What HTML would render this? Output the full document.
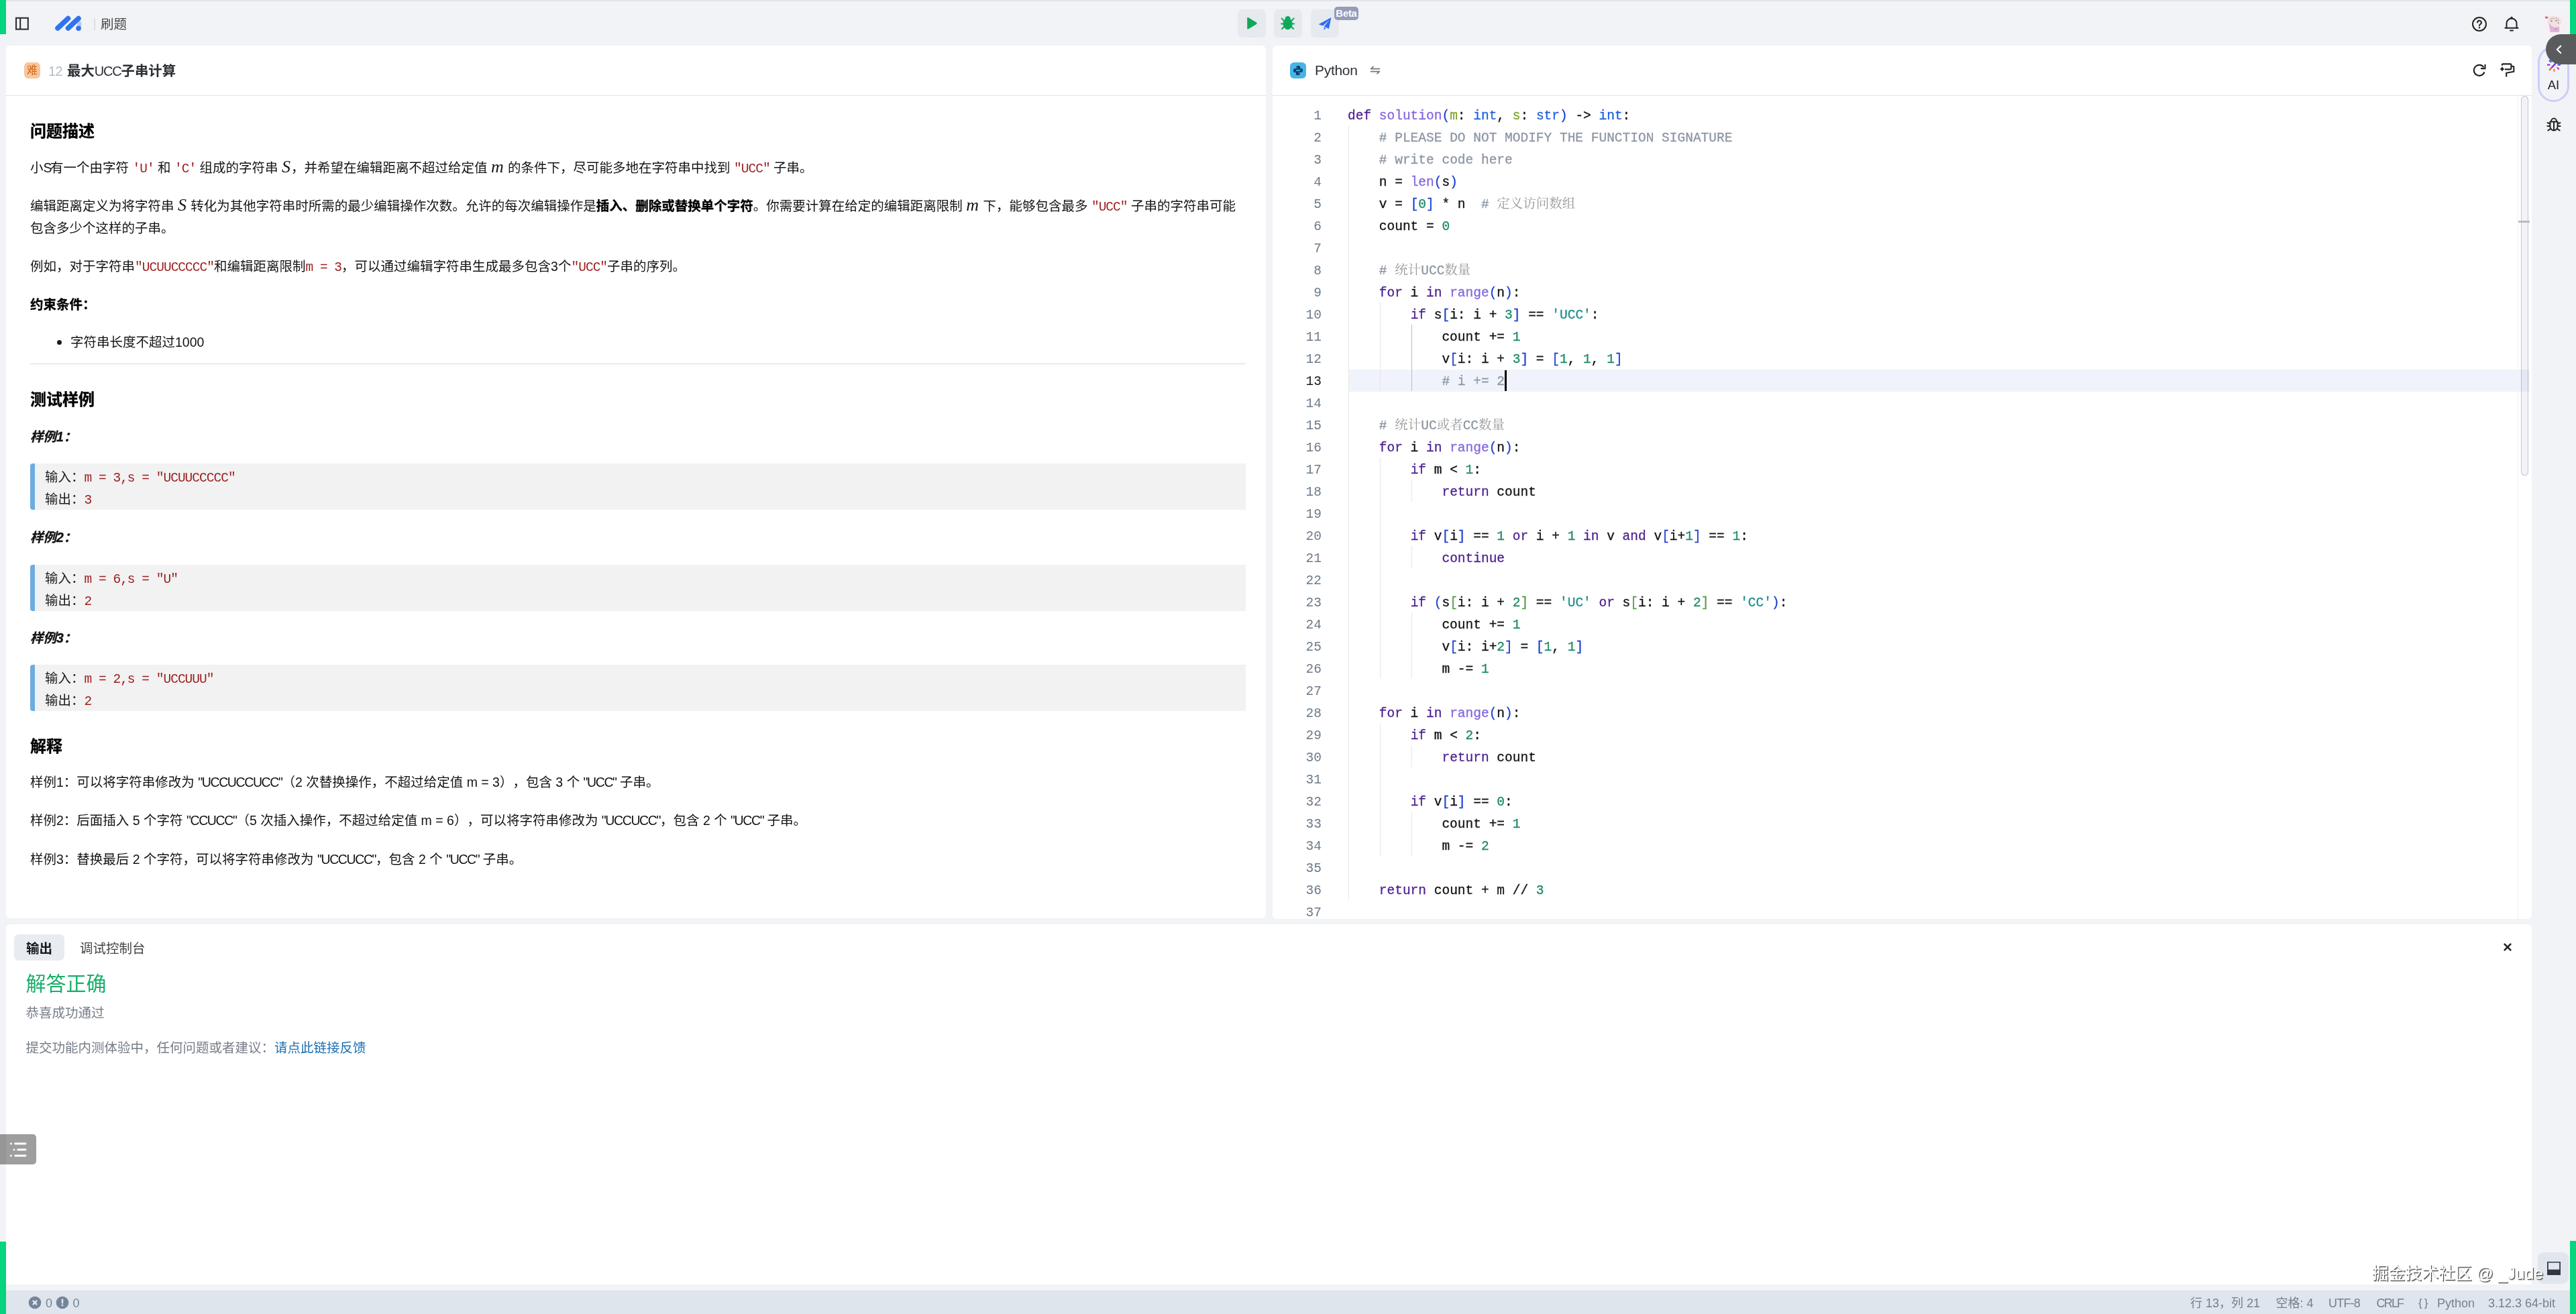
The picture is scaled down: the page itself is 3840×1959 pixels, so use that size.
<!DOCTYPE html>
<html lang="zh-CN">
<head>
<meta charset="utf-8">
<title>最大UCC子串计算</title>
<style>
*{box-sizing:border-box;margin:0;padding:0}
html,body{width:3840px;height:1959px;overflow:hidden;background:#f1f3f6}
body{position:relative;text-spacing-trim:space-all;font-family:"Liberation Sans","Noto Sans CJK SC",sans-serif;font-size:19.5px;color:#1c1c1c;line-height:33px}
.abs{position:absolute}
body>*{will-change:transform}
.gbar{position:absolute;background:#06d47e}
.panel{position:absolute;background:#fff;border-radius:6px}
.phead{position:absolute;left:0;right:0;top:0;height:75px;border-bottom:1px solid #e0e2e5}
/* top bar */
.tbtn{position:absolute;top:14px;width:42px;height:42px;border-radius:7px;background:#e6e9ee}
/* left content */
.md{position:absolute;left:36px;top:74px;width:1812px}
.md h2{font-size:24px;font-weight:700;line-height:36px;color:#000;-webkit-text-stroke:0.35px;position:absolute;left:0}
.md p{position:absolute;left:0;width:1812px;color:#141414}
.md .mono{font-family:"Liberation Mono",monospace;color:#9c1c1c;font-size:19.5px;letter-spacing:-0.98px;line-height:20px}
.md .math{font-family:"Liberation Serif",serif;font-style:italic;font-size:26px;line-height:20px;letter-spacing:1px}
.md b{font-weight:700;color:#000;-webkit-text-stroke:0.3px}
.bq{position:absolute;left:0;width:1812px;height:69px;background:#f2f2f2;border-left:7.5px solid #6cace0;border-radius:4px 0 0 4px;padding:4px 0 0 15px;white-space:pre}
.uc{letter-spacing:-1.4px}
.ex{font-style:italic;font-weight:700;color:#000;-webkit-text-stroke:0.3px}
/* editor */
.ed{position:absolute;left:0;top:0;right:0;bottom:0;font-family:"Liberation Mono","Noto Serif CJK SC",monospace;font-size:19.5px;line-height:33px;color:#111}
.ln{position:absolute;left:0;width:73px;text-align:right;color:#6c7a89;height:33px;padding-top:3px}
.ln.cur{color:#171a1f}
.cl{position:absolute;left:112px;white-space:pre;height:33px;padding-top:3px;-webkit-text-stroke:0.3px}
.k{color:#4b1f8f}.f{color:#8367df}.t{color:#1f5fe0}.p{color:#7ea321}.n{color:#1f8a68}.s{color:#1a8f8a}.c{color:#8c96a3}
.cj{font-family:"Noto Serif CJK SC",serif;line-height:0;font-weight:400;color:#999;-webkit-text-stroke:0}
.b1{color:#1f3fd0}.b2{color:#5a9a4c}.b3{color:#8a5a00}
.ig{position:absolute;width:1px;background:#e6e6e6}
.ig.act{background:#bdbdbd;width:1.5px}
/* bottom */
.sb{position:absolute;top:0;height:35px;line-height:38px;font-size:18px;color:#74808e;white-space:nowrap}
</style>
</head>
<body>
<!-- top strip -->
<div class="abs" style="left:0;top:0;width:3840px;height:2px;background:#e1e4e9"></div>
<div class="gbar" style="left:0;top:0;width:9px;height:51px"></div>
<div class="gbar" style="left:3831px;top:0;width:9px;height:51px"></div>
<div class="gbar" style="left:0;top:1851px;width:9px;height:108px"></div>
<div class="gbar" style="left:3831px;top:1850px;width:9px;height:109px"></div>
<!-- sidebar toggle icon -->
<svg class="abs" style="left:21px;top:24px" width="24" height="24" viewBox="0 0 24 24" fill="none" stroke="#2b2e35" stroke-width="2.1"><rect x="3" y="2.8" width="17.8" height="16.8"/><line x1="9.2" y1="2.8" x2="9.2" y2="19.6"/></svg>
<!-- logo -->
<svg class="abs" style="left:78px;top:20px" width="46" height="30" viewBox="0 0 46 30"><path d="M39 8.5 L43.3 14 L43.3 22 L36 22 Z" fill="#b9c8fa"/><path d="M8 22 L23.5 7.5" stroke="#2f73f0" stroke-width="7.6" stroke-linecap="round"/><path d="M23.5 22 L39 7.5" stroke="#2f73f0" stroke-width="7.6" stroke-linecap="round"/><circle cx="39" cy="22.2" r="3.8" fill="#2f73f0"/></svg>
<div class="abs" style="left:140px;top:27px;width:1.5px;height:18px;background:#dcdfe4"></div>
<div class="abs" style="left:150px;top:20px;font-size:19.5px;color:#4a4a4a;line-height:33px">刷题</div>
<!-- run buttons -->
<div class="tbtn" style="left:1845px"><svg width="42" height="42" viewBox="0 0 42 42"><path d="M14.2 13.2 Q14.2 11.2 16 12.2 L28 19.6 Q29.6 20.8 28 22 L16 29.2 Q14.2 30.2 14.2 28.2 Z" fill="#0fa958"/></svg></div>
<div class="tbtn" style="left:1899px"><svg width="42" height="42" viewBox="0 0 42 42" fill="#0fa958" stroke="#0fa958"><ellipse cx="20.6" cy="21.5" rx="6.6" ry="8.2"/><circle cx="20.6" cy="14" r="3.6"/><g stroke-width="2" stroke-linecap="round" fill="none"><path d="M15 17 L11.6 13.4"/><path d="M26.2 17 L29.6 13.4"/><path d="M14 21.6 L11 21.6"/><path d="M27.2 21.6 L30.2 21.6"/><path d="M15 26 L12 29"/><path d="M26.2 26 L29.2 29"/></g></svg></div>
<div class="tbtn" style="left:1954px"><svg width="42" height="42" viewBox="0 0 42 42"><path d="M30.4 12 L11.6 22.2 L18 24.6 L27.8 15.4 L19.8 25.6 L27 29 Z" fill="#2e6cf0"/><path d="M19.4 26.6 L19.9 30.6 L22.6 28.1 Z" fill="#2e6cf0"/></svg></div>
<div class="abs" style="left:1989px;top:10px;width:36px;height:20px;border-radius:5px;background:#959bb8;color:#fff;font-weight:700;font-size:15px;line-height:20px;text-align:center;letter-spacing:-0.3px">Beta</div>
<!-- right icons -->
<svg class="abs" style="left:3684px;top:24px" width="24" height="24" viewBox="0 0 24 24" fill="none" stroke="#222" stroke-width="2"><circle cx="12" cy="12" r="10"/><path d="M9.1 9.6 a2.9 2.9 0 1 1 4.3 2.5 c-1 .6-1.4 1.1-1.4 2.2" stroke-linecap="round"/><circle cx="12" cy="17.3" r="1.2" fill="#222" stroke="none"/></svg>
<svg class="abs" style="left:3732px;top:24px" width="24" height="24" viewBox="0 0 24 24" fill="none" stroke="#222" stroke-width="2" stroke-linecap="round" stroke-linejoin="round"><path d="M4.5 17.6 V11 a7.5 7.5 0 0 1 15 0 V17.6"/><path d="M2.4 17.8 H21.6"/><path d="M10 21.6 H14"/><circle cx="12" cy="2.6" r="0.8" fill="#222"/></svg>
<!-- avatar -->
<svg class="abs" style="left:3788px;top:15px" width="40" height="40" viewBox="0 0 40 40"><defs><radialGradient id="av" cx="50%" cy="50%" r="50%"><stop offset="0" stop-color="#f9f1f3"/><stop offset="0.75" stop-color="#f7f0f2"/><stop offset="1" stop-color="#f2f1f5"/></radialGradient></defs><circle cx="19.5" cy="20" r="18" fill="url(#av)"/><path d="M10 14.5 Q11.5 8.5 19 9 Q27 8.5 29.5 14 Q31 18 28 22 Q24 26 19 25.5 Q13 25 10.5 21 Q9 18 10 14.5 Z" fill="#f0e2e1"/><path d="M11.5 19 Q13 32 14 33 L27 33 Q27.5 27 27 24 Q22 27 18 25 Q14 23 11.500 19 Z" fill="#dcb6d8"/><path d="M13 14 q3-3 6-1 q3-2 6 0 q2 2 1 4" fill="none" stroke="#cfb9b6" stroke-width="1.2"/><circle cx="15.6" cy="16.2" r="1.2" fill="#a58a8a"/><circle cx="22.6" cy="15.8" r="1.2" fill="#a58a8a"/><circle cx="25.6" cy="19.4" r="0.8" fill="#8a6a70"/><path d="M5.600 10.600 q1.200-2 2.600-.5 q1.500-1.300 2.500 .3 q-.5 1.800-2.800 2.800 q-2-.8-2.300-2.600z" fill="#d9668a"/><path d="M21 27.500 v2.200 M22.800 27.200 v1.600" stroke="#9a6aa0" stroke-width="0.8"/></svg>
<!-- right side column -->
<div class="abs" style="left:3783px;top:69px;width:47px;height:83px;border:3px solid #cbcdf8;border-radius:24px;background:#f2f3f8"></div>
<svg class="abs" style="left:3796px;top:86px" width="22" height="22" viewBox="0 0 28 28" fill="none" stroke-linecap="round" stroke-width="3"><path d="M6 23 L18.5 9.5" stroke="#e8593a"/><path d="M11 17.6 L18.5 9.5" stroke="#7a3df0"/><path d="M14 2.6 V5.6" stroke="#2f5cf0"/><path d="M6 5.6 L8.4 8" stroke="#2f5cf0"/><path d="M22 5.6 L20.4 7.2" stroke="#1f2f9a"/><path d="M2.6 13.6 H5.6" stroke="#7a3df0"/><path d="M22.4 13.6 H25.4" stroke="#2f5cf0"/><path d="M20.6 19 L23 21.4" stroke="#d74fd0"/><path d="M14.6 22.4 V25.4" stroke="#f08a3a"/></svg>
<div class="abs" style="left:3783px;top:110px;width:47px;text-align:center;font-size:18.5px;line-height:33px;color:#222">AI</div>
<svg class="abs" style="left:3794px;top:172px" width="26" height="26" viewBox="0 0 26 26" fill="none" stroke="#222" stroke-width="2" stroke-linecap="round" stroke-linejoin="round"><path d="M7.4 9.4 H18.6 V16.8 a5.6 5.6 0 0 1 -11.2 0 Z"/><path d="M13 9.6 V22"/><path d="M9 9 a4 4.4 0 0 1 8 0"/><path d="M7.2 12.6 L3.6 11"/><path d="M18.8 12.6 L22.4 11"/><path d="M7.2 16 H3.4"/><path d="M18.8 16 H22.6"/><path d="M8 20 L4.4 22.4"/><path d="M18 20 L21.6 22.4"/></svg>
<!-- dark pill -->
<div class="abs" style="left:3795px;top:51px;width:60px;height:45px;border-radius:22.5px 0 0 22.5px;background:#595b5d"></div>
<svg class="abs" style="left:3808px;top:66px" width="14" height="16" viewBox="0 0 14 16" fill="none" stroke="#fff" stroke-width="2.2" stroke-linecap="round" stroke-linejoin="round"><path d="M9.2 2.6 L3.8 7.8 L9.2 13"/></svg>
<!-- LEFT PANEL -->
<div class="panel" style="left:9px;top:68px;width:1878px;height:1301px">
  <div class="phead"></div>
  <div class="abs" style="left:27px;top:25px;width:24px;height:24px;border-radius:6px;background:#f5c6a0;color:#d9620c;font-size:16px;line-height:23px;text-align:center">难</div>
  <div class="abs" style="left:63px;top:22px;font-size:20px;color:#b5bcc6;line-height:33px;letter-spacing:-0.5px">12</div>
  <div class="abs" style="left:91px;top:22px;font-size:20.4px;font-weight:700;color:#2b2f36;line-height:33px;white-space:nowrap">最大<span style="font-weight:400;letter-spacing:-1.2px;font-size:20px">UCC</span>子串计算</div>
  <div class="md" style="top:0">
    <h2 style="top:110px">问题描述</h2>
    <p style="top:165.5px">小<span style="letter-spacing:-2.5px">S</span>有一个由字符 <span class="mono">'U'</span> 和 <span class="mono">'C'</span> 组成的字符串 <span class="math">S</span>，并希望在编辑距离不超过给定值 <span class="math">m</span> 的条件下，尽可能多地在字符串中找到 <span class="mono">"UCC"</span> 子串。</p>
    <p style="top:223.3px">编辑距离定义为将字符串 <span class="math">S</span> 转化为其他字符串时所需的最少编辑操作次数。允许的每次编辑操作是<b>插入、删除或替换单个字符</b>。你需要计算在给定的编辑距离限制 <span class="math">m</span> 下，能够包含最多 <span class="mono">"UCC"</span> 子串的字符串可能包含多少个这样的子串。</p>
    <p style="top:312.9px">例如，对于字符串<span class="mono">"UCUUCCCCC"</span>和编辑距离限制<span class="mono">m = 3</span>，可以通过编辑字符串生成最多包含3个<span class="mono">"UCC"</span>子串的序列。</p>
    <p style="top:370px"><b>约束条件：</b></p>
    <div class="abs" style="left:40px;top:439px;width:7px;height:7px;border-radius:50%;background:#1c1c1c"></div>
    <p style="top:426.3px;left:60px">字符串长度不超过1000</p>
    <div class="abs" style="left:0;top:473.5px;width:1812px;height:1.5px;background:#d9d9d9"></div>
    <h2 style="top:509.5px">测试样例</h2>
    <p style="top:567px" class="ex">样例1：</p>
    <div class="bq" style="top:623.4px">输入：<span class="mono">m = 3,s = "UCUUCCCCC"</span>
输出：<span class="mono">3</span></div>
    <p style="top:717px" class="ex">样例2：</p>
    <div class="bq" style="top:773.8px">输入：<span class="mono">m = 6,s = "U"</span>
输出：<span class="mono">2</span></div>
    <p style="top:867px" class="ex">样例3：</p>
    <div class="bq" style="top:923.4px">输入：<span class="mono">m = 2,s = "UCCUUU"</span>
输出：<span class="mono">2</span></div>
    <h2 style="top:1026.7px">解释</h2>
    <p style="top:1082.3px">样例1：可以将字符串修改为 <span class="uc">"UCCUCCUCC"</span>（2 次替换操作，不超过给定值 m = 3），包含 3 个 <span class="uc">"UCC"</span> 子串。</p>
    <p style="top:1139.4px">样例2：后面插入 5 个字符 <span class="uc">"CCUCC"</span>（5 次插入操作，不超过给定值 m = 6），可以将字符串修改为 <span class="uc">"UCCUCC"</span>，包含 2 个 <span class="uc">"UCC"</span> 子串。</p>
    <p style="top:1196.8px">样例3：替换最后 2 个字符，可以将字符串修改为 <span class="uc">"UCCUCC"</span>，包含 2 个 <span class="uc">"UCC"</span> 子串。</p>
  </div>
</div>
<!-- RIGHT PANEL -->
<div class="panel" style="left:1897px;top:68px;width:1877px;height:1302px;overflow:hidden">
  <div class="phead"></div>
  <div class="abs" style="left:26px;top:25px;width:24px;height:24px;border-radius:6px;background:#46b4e8"></div>
  <svg class="abs" style="left:30px;top:29px" width="16" height="16" viewBox="0 0 16 16"><path d="M7.9 1 C5.6 1 5 2 5 3.1 V4.6 H8.1 V5.2 H3.4 C2 5.2 1 6.3 1 8.1 C1 9.9 2 11 3.3 11 H4.6 V9.3 C4.6 8 5.6 7 6.9 7 H9.6 C10.5 7 11.2 6.3 11.2 5.4 V3.1 C11.2 1.8 10.2 1 7.9 1 Z M6.3 2.1 a.7 .7 0 1 1 0 1.4 a.7 .7 0 0 1 0 -1.4z" fill="#0c3a66"/><path d="M8.1 15 C10.4 15 11 14 11 12.9 V11.4 H7.9 V10.8 H12.6 C14 10.8 15 9.7 15 7.9 C15 6.1 14 5 12.7 5 H11.4 V6.7 C11.4 8 10.4 9 9.1 9 H6.4 C5.5 9 4.8 9.7 4.8 10.6 V12.9 C4.8 14.2 5.8 15 8.1 15 Z M9.7 13.9 a.7 .7 0 1 1 0 -1.4 a.7 .7 0 0 1 0 1.4z" fill="#0c3a66"/></svg>
  <div class="abs" style="left:63px;top:20px;font-size:21px;color:#2b2f36;line-height:33px;letter-spacing:-0.3px">Python</div>
  <svg class="abs" style="left:145px;top:30px" width="16" height="14" viewBox="0 0 16 14" fill="none" stroke="#6b7785" stroke-width="1.6" stroke-linecap="round" stroke-linejoin="round"><path d="M14.6 4.6 H1.6 L5.2 1.4"/><path d="M1.4 8.6 H14.4 L10.8 11.8"/></svg>
  <!-- refresh -->
  <svg class="abs" style="left:1786px;top:23px" width="28" height="28" viewBox="0 0 28 28" fill="none" stroke="#222" stroke-width="2.1" stroke-linejoin="miter"><path d="M19.35 9.2 A8 8 0 1 0 20.4 16.4"/><path d="M21.5 4.9 V11.1 H15"/></svg>
  <!-- format -->
  <svg class="abs" style="left:1827px;top:23px" width="28" height="28" viewBox="0 0 28 28" fill="none" stroke="#222" stroke-width="2.1" stroke-linejoin="round"><path d="M10 12.4 H18 Q19.4 12.4 19.4 11 V5.8 Q19.4 4.4 18 4.4 H7.2 Q5.8 4.4 5.8 5.8 V6.8"/><path d="M19.4 7.7 H22 Q23.3 7.7 23.3 9.1 V15.8 L12.2 17.8 V23.6"/><path d="M6 8.3 Q7 11 9.7 11.9 Q7 12.8 6 15.5 Q5 12.8 2.3 11.9 Q5 11 6 8.3 Z" fill="#222" stroke="none"/></svg>
  <!-- editor -->
  <div class="ed">
    <div class="abs" style="left:113px;top:483px;width:1761px;height:33px;background:#f1f3fc"></div>
    <div class="abs" style="left:1856px;top:75px;width:1px;height:1227px;background:#f0f0ed"></div>
    <i class="ig" style="left:113.0px;top:119px;height:1155px"></i><i class="ig" style="left:159.8px;top:383px;height:132px"></i><i class="ig act" style="left:206.6px;top:416px;height:99px"></i><i class="ig" style="left:159.8px;top:614px;height:330px"></i><i class="ig" style="left:206.6px;top:647px;height:33px"></i><i class="ig" style="left:206.6px;top:746px;height:33px"></i><i class="ig" style="left:206.6px;top:845px;height:99px"></i><i class="ig" style="left:159.8px;top:1010px;height:198px"></i><i class="ig" style="left:206.6px;top:1043px;height:33px"></i><i class="ig" style="left:206.6px;top:1142px;height:66px"></i>
    <div class="ln" style="top:86px">1</div><div class="cl" style="top:86px"><span class="k">def</span> <span class="f">solution</span><span class="b1">(</span><span class="p">m</span>: <span class="t">int</span>, <span class="p">s</span>: <span class="t">str</span><span class="b1">)</span> -&gt; <span class="t">int</span>:</div>
<div class="ln" style="top:119px">2</div><div class="cl" style="top:119px">    <span class="c"># PLEASE DO NOT MODIFY THE FUNCTION SIGNATURE</span></div>
<div class="ln" style="top:152px">3</div><div class="cl" style="top:152px">    <span class="c"># write code here</span></div>
<div class="ln" style="top:185px">4</div><div class="cl" style="top:185px">    n = <span class="f">len</span><span class="b1">(</span>s<span class="b1">)</span></div>
<div class="ln" style="top:218px">5</div><div class="cl" style="top:218px">    v = <span class="b1">[</span><span class="n">0</span><span class="b1">]</span> * n  <span class="c"># <span class="cj">定义访问数组</span></span></div>
<div class="ln" style="top:251px">6</div><div class="cl" style="top:251px">    count = <span class="n">0</span></div>
<div class="ln" style="top:284px">7</div><div class="cl" style="top:284px"></div>
<div class="ln" style="top:317px">8</div><div class="cl" style="top:317px">    <span class="c"># <span class="cj">统计</span>UCC<span class="cj">数量</span></span></div>
<div class="ln" style="top:350px">9</div><div class="cl" style="top:350px">    <span class="k">for</span> i <span class="k">in</span> <span class="f">range</span><span class="b1">(</span>n<span class="b1">)</span>:</div>
<div class="ln" style="top:383px">10</div><div class="cl" style="top:383px">        <span class="k">if</span> s<span class="b1">[</span>i: i + <span class="n">3</span><span class="b1">]</span> == <span class="s">&#x27;UCC&#x27;</span>:</div>
<div class="ln" style="top:416px">11</div><div class="cl" style="top:416px">            count += <span class="n">1</span></div>
<div class="ln" style="top:449px">12</div><div class="cl" style="top:449px">            v<span class="b1">[</span>i: i + <span class="n">3</span><span class="b1">]</span> = <span class="b1">[</span><span class="n">1</span>, <span class="n">1</span>, <span class="n">1</span><span class="b1">]</span></div>
<div class="ln cur" style="top:482px">13</div><div class="cl" style="top:482px">            <span class="c"># i += 2</span></div>
<div class="ln" style="top:515px">14</div><div class="cl" style="top:515px"></div>
<div class="ln" style="top:548px">15</div><div class="cl" style="top:548px">    <span class="c"># <span class="cj">统计</span>UC<span class="cj">或者</span>CC<span class="cj">数量</span></span></div>
<div class="ln" style="top:581px">16</div><div class="cl" style="top:581px">    <span class="k">for</span> i <span class="k">in</span> <span class="f">range</span><span class="b1">(</span>n<span class="b1">)</span>:</div>
<div class="ln" style="top:614px">17</div><div class="cl" style="top:614px">        <span class="k">if</span> m &lt; <span class="n">1</span>:</div>
<div class="ln" style="top:647px">18</div><div class="cl" style="top:647px">            <span class="k">return</span> count</div>
<div class="ln" style="top:680px">19</div><div class="cl" style="top:680px"></div>
<div class="ln" style="top:713px">20</div><div class="cl" style="top:713px">        <span class="k">if</span> v<span class="b1">[</span>i<span class="b1">]</span> == <span class="n">1</span> <span class="k">or</span> i + <span class="n">1</span> <span class="k">in</span> v <span class="k">and</span> v<span class="b1">[</span>i+<span class="n">1</span><span class="b1">]</span> == <span class="n">1</span>:</div>
<div class="ln" style="top:746px">21</div><div class="cl" style="top:746px">            <span class="k">continue</span></div>
<div class="ln" style="top:779px">22</div><div class="cl" style="top:779px"></div>
<div class="ln" style="top:812px">23</div><div class="cl" style="top:812px">        <span class="k">if</span> <span class="b1">(</span>s<span class="b2">[</span>i: i + <span class="n">2</span><span class="b2">]</span> == <span class="s">&#x27;UC&#x27;</span> <span class="k">or</span> s<span class="b2">[</span>i: i + <span class="n">2</span><span class="b2">]</span> == <span class="s">&#x27;CC&#x27;</span><span class="b1">)</span>:</div>
<div class="ln" style="top:845px">24</div><div class="cl" style="top:845px">            count += <span class="n">1</span></div>
<div class="ln" style="top:878px">25</div><div class="cl" style="top:878px">            v<span class="b1">[</span>i: i+<span class="n">2</span><span class="b1">]</span> = <span class="b1">[</span><span class="n">1</span>, <span class="n">1</span><span class="b1">]</span></div>
<div class="ln" style="top:911px">26</div><div class="cl" style="top:911px">            m -= <span class="n">1</span></div>
<div class="ln" style="top:944px">27</div><div class="cl" style="top:944px"></div>
<div class="ln" style="top:977px">28</div><div class="cl" style="top:977px">    <span class="k">for</span> i <span class="k">in</span> <span class="f">range</span><span class="b1">(</span>n<span class="b1">)</span>:</div>
<div class="ln" style="top:1010px">29</div><div class="cl" style="top:1010px">        <span class="k">if</span> m &lt; <span class="n">2</span>:</div>
<div class="ln" style="top:1043px">30</div><div class="cl" style="top:1043px">            <span class="k">return</span> count</div>
<div class="ln" style="top:1076px">31</div><div class="cl" style="top:1076px"></div>
<div class="ln" style="top:1109px">32</div><div class="cl" style="top:1109px">        <span class="k">if</span> v<span class="b1">[</span>i<span class="b1">]</span> == <span class="n">0</span>:</div>
<div class="ln" style="top:1142px">33</div><div class="cl" style="top:1142px">            count += <span class="n">1</span></div>
<div class="ln" style="top:1175px">34</div><div class="cl" style="top:1175px">            m -= <span class="n">2</span></div>
<div class="ln" style="top:1208px">35</div><div class="cl" style="top:1208px"></div>
<div class="ln" style="top:1241px">36</div><div class="cl" style="top:1241px">    <span class="k">return</span> count + m // <span class="n">3</span></div>
<div class="ln" style="top:1274px">37</div><div class="cl" style="top:1274px"></div>
    <div class="abs" style="left:345.5px;top:484px;width:3px;height:31px;background:#000"></div>
    <!-- scrollbar -->
    <div class="abs" style="left:1861px;top:75px;width:11px;height:566px;border:1.5px solid rgba(100,110,145,.36);border-radius:6px;background:rgba(110,120,170,.09)"></div>
    <div class="abs" style="left:1857px;top:261px;width:17px;height:3px;background:#b9bcc2"></div>
  </div>
</div>
<!-- BOTTOM PANEL -->
<div class="panel" style="left:9px;top:1378px;width:3765px;height:537px;border-radius:6px 6px 0 0">
  <div class="abs" style="left:12px;top:15px;width:75px;height:39px;border-radius:7px;background:#e8ebf0"></div>
  <div class="abs" style="left:30px;top:19.5px;font-size:19.5px;font-weight:700;color:#16181d;line-height:33px">输出</div>
  <div class="abs" style="left:110px;top:19.5px;font-size:19.5px;color:#444;line-height:33px;white-space:nowrap">调试控制台</div>
  <div class="abs" style="left:29.5px;top:67px;font-size:30px;color:#1aaf6b;line-height:44px;white-space:nowrap">解答正确</div>
  <div class="abs" style="left:29.5px;top:115.5px;font-size:19.5px;color:#767d88;line-height:33px;white-space:nowrap">恭喜成功通过</div>
  <div class="abs" style="left:29.5px;top:167.5px;font-size:19.5px;color:#767d88;line-height:33px;white-space:nowrap">提交功能内测体验中，任何问题或者建议：<span style="color:#1a6fb5">请点此链接反馈</span></div>
  <svg class="abs" style="left:3721px;top:26px" width="16" height="16" viewBox="0 0 16 16" stroke="#222" stroke-width="2.6" stroke-linecap="round"><path d="M3.6 3.6 L12.4 12.4 M12.4 3.6 L3.6 12.4"/></svg>
</div>
<!-- floating outline button -->
<div class="abs" style="left:0;top:1691px;width:54px;height:45px;border-radius:0 5px 5px 0;background:rgba(0,0,0,.38)"></div>
<svg class="abs" style="left:13px;top:1699.5px" width="28" height="28" viewBox="0 0 28 28" fill="#fff" stroke="#fff" stroke-linecap="round"><circle cx="3.4" cy="5" r="1.5" stroke="none"/><circle cx="8" cy="14" r="1.5" stroke="none"/><circle cx="3.4" cy="23" r="1.5" stroke="none"/><path d="M9.6 5 H25" stroke-width="2.8"/><path d="M13.6 14 H25" stroke-width="2.8"/><path d="M9.6 23 H25" stroke-width="2.8"/></svg>
<!-- bottom-right toggle -->
<div class="abs" style="left:3783px;top:1867px;width:46px;height:47px;border-radius:9px;background:#e1e6ee"></div>
<svg class="abs" style="left:3796px;top:1880px" width="22" height="22" viewBox="0 0 22 22"><rect x="1" y="1" width="20" height="20" fill="#323743"/><rect x="2.8" y="2.5" width="16.4" height="10.2" fill="#e1e6ee"/></svg>
<!-- watermark -->
<div class="abs" style="left:3536px;top:1880px;font-size:24.8px;line-height:38px;color:#fff;white-space:nowrap;text-shadow:1px 1px 0.5px #444,1.5px 1.5px 1px rgba(0,0,0,.25);letter-spacing:0">掘金技术社区 @ _Jude</div>
<!-- STATUS BAR -->
<div class="abs" style="left:9px;top:1924px;width:3822px;height:35px;background:#dfe5ed">
  <svg class="abs" style="left:33px;top:8px" width="20" height="20" viewBox="0 0 20 20"><circle cx="10" cy="10" r="9.3" fill="#74859a"/><path d="M6.9 6.9 L13.1 13.1 M13.1 6.9 L6.9 13.1" stroke="#e6ebf2" stroke-width="2.2" stroke-linecap="butt"/></svg>
  <div class="sb" style="left:59px">0</div>
  <svg class="abs" style="left:74px;top:8px" width="20" height="20" viewBox="0 0 20 20"><circle cx="10" cy="10" r="9.3" fill="#74859a"/><path d="M10 4.600 V11.4" stroke="#e6ebf2" stroke-width="2.4" stroke-linecap="butt"/><rect x="8.8" y="12.8" width="2.4" height="2.4" fill="#e6ebf2"/></svg>
  <div class="sb" style="left:99.5px">0</div>
  <div class="sb" style="left:3256px">行 13，列 21</div>
  <div class="sb" style="left:3383.5px">空格: 4</div>
  <div class="sb" style="left:3462px;letter-spacing:-0.8px">UTF-8</div>
  <div class="sb" style="left:3533.5px;letter-spacing:-1.8px">CRLF</div>
  <div class="sb" style="left:3596px;letter-spacing:3px;font-size:17px">{}</div>
  <div class="sb" style="left:3624px">Python</div>
  <div class="sb" style="left:3700px">3.12.3 64-bit</div>
</div>
</body>
</html>
